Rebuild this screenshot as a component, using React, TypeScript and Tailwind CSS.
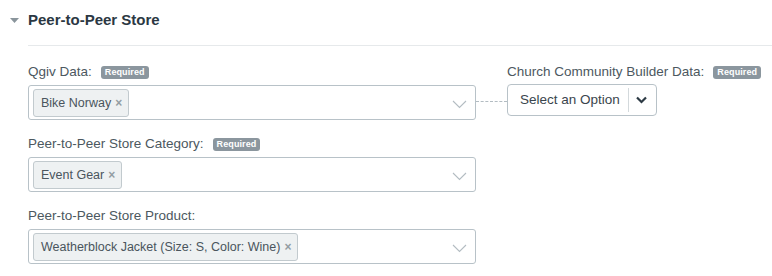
import React from 'react';

const font = 'font-["Liberation_Sans",Arial,sans-serif]';

const Badge: React.FC = () => (
  <span className="ml-[9px] inline-flex h-[13px] items-center rounded-[3px] bg-[#8b969e] px-[4px] text-[9px] font-bold leading-none tracking-[0.1px] text-white">
    Required
  </span>
);

const ThinChevron: React.FC = () => (
  <svg width="15" height="9" viewBox="0 0 15 9" fill="none" className="mr-[8px]">
    <path d="M1 1l6.5 6.5L14 1" stroke="#b3bcc2" strokeWidth="1.1" />
  </svg>
);

const Tag: React.FC<{ text: string }> = ({ text }) => (
  <span className="inline-flex h-[28px] items-center rounded-[3px] border border-[#c2cace] bg-[#eef1f2] pl-[7px] pr-[6px] text-[12.5px] text-[#4a555d]">
    {text}
    <span className="ml-[4px] text-[12px] font-bold text-[#939da3]">×</span>
  </span>
);

const Label: React.FC<{ text: string; required?: boolean }> = ({ text, required }) => (
  <div className="flex h-[14px] items-center text-[13.5px] text-[#4c5860]">
    {text}
    {required && <Badge />}
  </div>
);

const Field: React.FC<{ label: string; required?: boolean; tag: string }> = ({ label, required, tag }) => (
  <div className="mb-[17px]">
    <Label text={label} required={required} />
    <div className="mt-[6px] flex h-[35px] items-start justify-between rounded-[3px] border border-[#b8c2c8] bg-white pl-[4px] pt-[3px]">
      <Tag text={tag} />
      <div className="self-center">
        <ThinChevron />
      </div>
    </div>
  </div>
);

export default function App() {
  return (
    <div className={`h-[276px] w-[772px] overflow-hidden bg-white ${font}`}>
      <div className="flex h-[39px] items-center pl-[10px] pt-[1px]">
        <svg width="9" height="5" viewBox="0 0 9 5" className="mr-[9px]">
          <path d="M0 0h9L4.5 5z" fill="#8a959c" />
        </svg>
        <span className="text-[15px] font-bold text-[#2b3843]">Peer-to-Peer Store</span>
      </div>
      <div className="ml-[28px] mt-[6px] border-t border-[#e6e9eb]" />
      <div className="flex pl-[28px] pt-[19px]">
        <div className="w-[448px]">
          <Field label="Qgiv Data:" required tag="Bike Norway" />
          <Field label="Peer-to-Peer Store Category:" required tag="Event Gear" />
          <Field label="Peer-to-Peer Store Product:" tag="Weatherblock Jacket (Size: S, Color: Wine)" />
        </div>
        <div className="mt-[36px] w-[31px] border-t border-dashed border-[#b3bcc2]" />
        <div>
          <Label text="Church Community Builder Data:" required />
          <div className="mt-[5px] flex h-[32px] w-[150px] items-center rounded-[4px] border border-[#b8c2c8] bg-white">
            <span className="flex-1 pl-[12px] text-[13.5px] text-[#3a454d]">Select an Option</span>
            <div className="h-[24px] border-l border-[#d3d9dc]" />
            <svg width="27" height="10" viewBox="0 0 27 10" fill="none">
              <path d="M8 2.5l4.5 4.5 4.5-4.5" stroke="#2d3a44" strokeWidth="2.2" />
            </svg>
          </div>
        </div>
      </div>
    </div>
  );
}
